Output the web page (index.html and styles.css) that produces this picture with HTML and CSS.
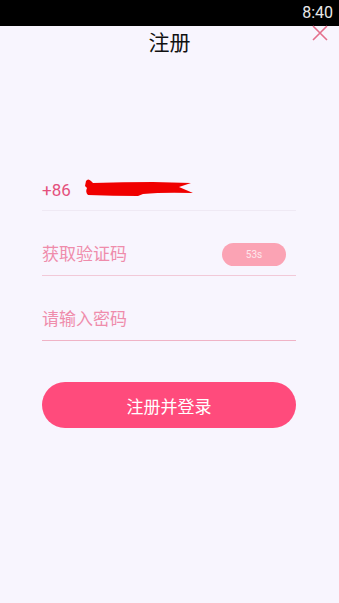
FILE: index.html
```html
<!DOCTYPE html>
<html lang="zh">
<head>
<meta charset="utf-8">
<link rel="stylesheet" href="styles.css">
</head>
<body>
<div class="status"><span class="time">8:40</span></div>
<div class="page">
  <header class="top">
    <h1 class="title">注册</h1>
    <svg class="close" width="18" height="18" viewBox="0 0 18 18"><path d="M2 2 L16 16 M16 2 L2 16" stroke="#e46f8c" stroke-width="1.6" fill="none"/></svg>
  </header>
  <form class="form">
    <div class="row phone">
      <span class="cc">+86</span>
      <svg class="scribble" width="112" height="20" viewBox="0 0 112 20"><path d="M3 3 Q5 0 8 3 L10 5 Q40 4 70 4 L108 5 L96 9 L110 15 Q80 14 60 16 L55 18 Q30 18 5 17 Q2 14 4 10 L2 8 Z" fill="#f00000"/></svg>
    </div>
    <div class="row code">
      <span class="ph">获取验证码</span>
      <span class="timer">53s</span>
    </div>
    <div class="row pwd">
      <span class="ph">请输入密码</span>
    </div>
    <button type="button" class="submit">注册并登录</button>
  </form>
</div>
</body>
</html>
```
FILE: styles.css
```css
html, body { margin: 0; padding: 0; }
body {
  width: 339px; height: 603px; overflow: hidden;
  background: #f8f5fe;
  font-family: "Noto Sans CJK SC", "Roboto", sans-serif;
}
.status {
  height: 26px; background: #000;
  display: flex; justify-content: flex-end; align-items: center;
}
.time {
  color: #e8e8e8; font-family: "Roboto", sans-serif; font-size: 16px;
  padding-right: 6px; line-height: 26px;
}
.top {
  position: relative; height: 30px;
  display: flex; justify-content: center; align-items: center;
}
.title {
  margin: 0; font-size: 21px; font-weight: 400; color: #111;
  line-height: 30px;
}
.close { position: absolute; right: 10px; top: -2px; }
.form {
  margin: 0 43px 0 42px; padding-top: 90px;
  display: flex; flex-direction: column;
}
.row {
  box-sizing: border-box; height: 65px;
  display: flex; align-items: center;
  border-bottom: 1px solid #efe9f4;
  padding-top: 24px;
}
.row.code { border-bottom-color: #f2c9d8; }
.row.pwd { border-bottom-color: #f0b3c6; }
.cc { color: #e4507c; font-size: 17px; font-family: "Roboto", sans-serif; }
.scribble { margin-left: 12px; margin-top: -4px; }
.ph { color: #ef8cab; font-size: 17px; flex: 1; padding-bottom: 5px; }
.timer {
  width: 64px; height: 23px; border-radius: 12px;
  background: #fba3b4; color: #fde7ec;
  font-size: 10px; font-family: "Roboto", sans-serif;
  display: flex; align-items: center; justify-content: center;
  margin-right: 10px; margin-bottom: 2px;
}
.submit {
  margin-top: 41px; height: 46px; border: 0; border-radius: 23px;
  background: #ff4b7c; color: #fff; font-size: 17px;
  font-family: "Noto Sans CJK SC", sans-serif;
}
```
